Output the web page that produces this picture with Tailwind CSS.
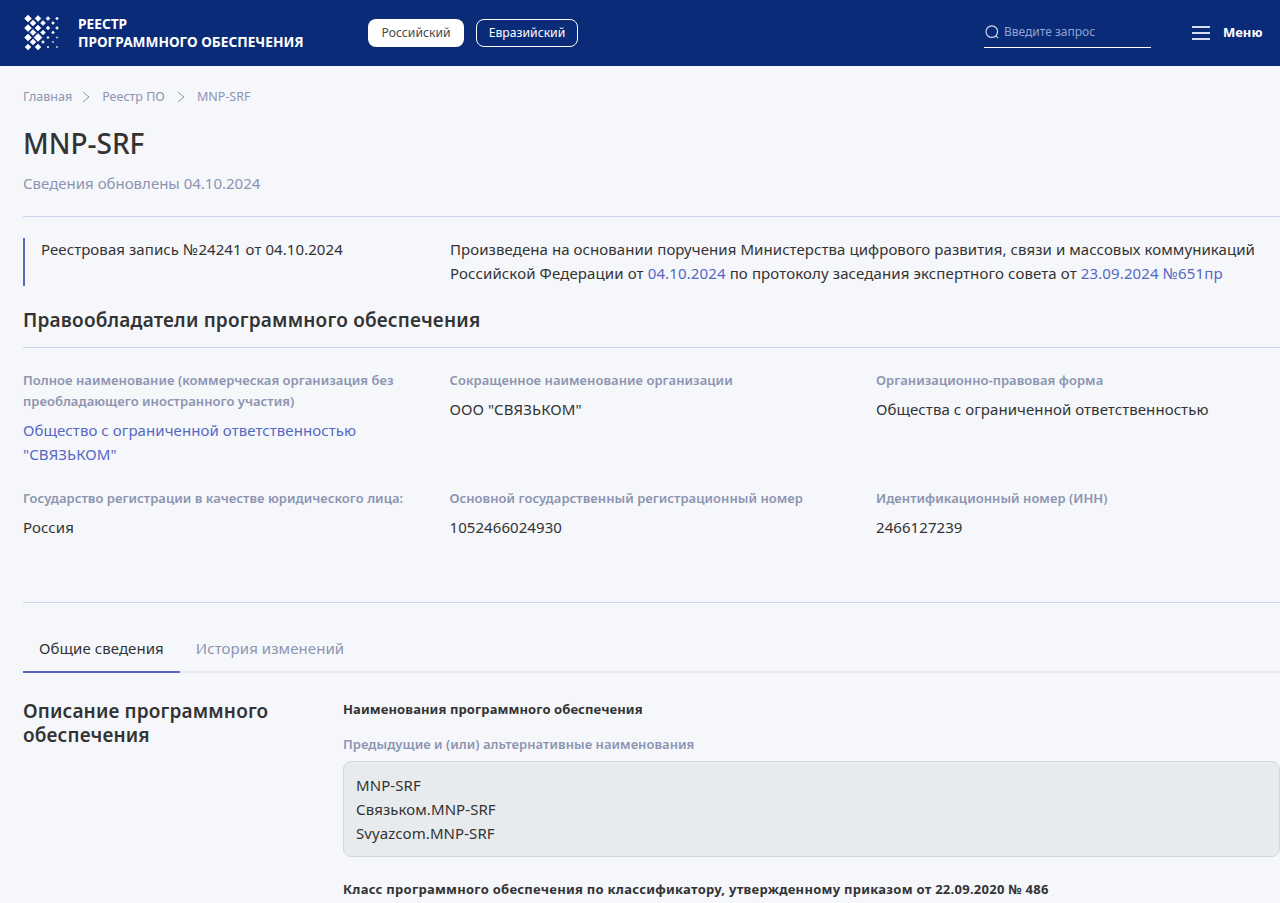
<!DOCTYPE html>
<html lang="ru">
<head>
    <meta charset="UTF-8">
    <meta name="viewport" content="width=device-width, initial-scale=1.0">
    <title>MNP-SRF</title>
    <script src="https://cdn.jsdelivr.net/npm/@tailwindcss/browser@4"></script>
</head>
<body class="bg-[#f5f7fb] text-[#333333] font-['Noto_Sans',sans-serif] h-[903px] overflow-hidden">

    <!-- Header -->
    <header class="h-[66px] bg-[#0a2b78] flex items-center pl-6 text-white">
        <svg class="w-[36px] h-[36px] shrink-0" viewBox="0 0 36 36" fill="#fff" stroke="#fff" stroke-width="0.500" stroke-linejoin="round">
            <!-- odd rows -->
            <path d="M4 0l3.500 3.500-3.500 3.500-3.500-3.500zM14 .5l3 3-3 3-3-3zM24 1.500l2 2-2 2-2-2zM33 2l1.500 1.500-1.500 1.500-1.500-1.500z"/>
            <path d="M4 9.500l3.500 3.500-3.500 3.500-3.500-3.500zM14 10l3 3-3 3-3-3zM24 11l2 2-2 2-2-2zM33 11.500l1.500 1.500-1.500 1.500-1.500-1.500z"/>
            <path d="M4 19l3.500 3.500-3.500 3.500-3.500-3.500zM14 18.500l4 4-4 4-4-4zM24 21.300l1.200 1.200-1.200 1.200-1.200-1.200zM33 21.700l.8.8-.8.8-.8-.8z"/>
            <path d="M4 29l3 3-3 3-3-3zM14 29l3 3-3 3-3-3zM24 31l1 1-1 1-1-1zM33 31.200l.8.8-.8.8-.8-.8z"/>
            <!-- even rows -->
            <path d="M9 5l3 3-3 3-3-3zM19 5.500l2.500 2.500-2.500 2.500-2.500-2.500zM29 6.500l1.500 1.500-1.500 1.500-1.500-1.500z"/>
            <path d="M9 14.500l3 3-3 3-3-3zM19 15l2.500 2.500-2.500 2.500-2.500-2.500zM29 16l1.500 1.500-1.500 1.500-1.500-1.500z"/>
            <path d="M9 24l3 3-3 3-3-3zM19 25.500l1.500 1.500-1.500 1.500-1.500-1.500zM29 26.200l.8.8-.8.8-.8-.8z"/>
        </svg>
        <div class="ml-[18px] w-[290px] text-[13.700px] leading-[18px] font-bold">
            <div>РЕЕСТР</div>
            <div>ПРОГРАММНОГО ОБЕСПЕЧЕНИЯ</div>
        </div>
        <div class="flex gap-3 text-[12.200px]">
            <div class="w-[96px] h-[28px] bg-white text-[#4a4a4a] rounded-lg flex items-center justify-center">Российский</div>
            <div class="w-[102px] h-[28px] border border-white rounded-lg flex items-center justify-center">Евразийский</div>
        </div>
        <div class="ml-[406px] w-[167px] h-[30px] border-b border-white flex items-center pl-[1px] pb-[1px]">
            <svg class="w-[14px] h-[14px]" viewBox="0 0 14 14" fill="none" stroke="#c9d6ee" stroke-width="1.200"><circle cx="6.800" cy="6.600" r="5.800"/><path d="M10.800 10.800l2.400 2.400"/></svg>
            <span class="ml-[5px] text-[12px] text-[#8ea5d3]">Введите запрос</span>
        </div>
        <div class="ml-[41px] w-[18px] h-[14px] flex flex-col justify-between">
            <div class="h-[2px] bg-[#d5def0]"></div>
            <div class="h-[2px] bg-[#d5def0]"></div>
            <div class="h-[2px] bg-[#d5def0]"></div>
        </div>
        <div class="ml-[13px] text-[13px] font-bold">Меню</div>
    </header>

    <main class="pl-[23px]">
        <!-- Breadcrumbs -->
        <nav class="h-[60px] pt-[2px] flex items-center text-[12.500px] text-[#8c94b0]">
            <span>Главная</span>
            <svg class="w-[8px] h-[12px] ml-[10px] mr-3" viewBox="0 0 8 12" fill="none" stroke="#8c94b0"><path d="M1 1l6 5-6 5"/></svg>
            <span>Реестр ПО</span>
            <svg class="w-[8px] h-[12px] mx-3" viewBox="0 0 8 12" fill="none" stroke="#8c94b0"><path d="M1 1l6 5-6 5"/></svg>
            <span>MNP-SRF</span>
        </nav>

        <h1 class="text-[28px] leading-[34px] font-medium">MNP-SRF</h1>
        <p class="mt-[13px] text-[15px] leading-[20px] text-[#8c94b0]">Сведения обновлены 04.10.2024</p>

        <div class="mt-[23px] border-t border-[#ccd3ee]"></div>

        <!-- Registry record -->
        <section class="mt-[21px] flex h-[48px] border-l-2 border-[#5b6bb5] text-[15px] tracking-[0.07px]">
            <div class="w-[425px] -mt-[1px] pl-4 leading-[24px]">Реестровая запись №24241 от 04.10.2024</div>
            <div class="-mt-[1px] leading-[24px]">
                Произведена на основании поручения Министерства цифрового развития, связи и массовых коммуникаций<br>
                <span class="tracking-[0.12px]">Российской Федерации от <span class="text-[#5568c4]">04.10.2024</span> по протоколу заседания экспертного совета от <span class="text-[#5568c4]">23.09.2024 №651пр</span></span>
            </div>
        </section>

        <h2 class="mt-[20px] text-[19px] leading-[28px] font-semibold tracking-[0.2px]">Правообладатели программного обеспечения</h2>
        <div class="mt-[13px] border-t border-[#ccd3ee]"></div>

        <!-- Owner fields -->
        <section class="mt-[22px] grid grid-cols-[426.500px_426.500px_1fr] text-[15px] tracking-[0.07px]">
            <div class="h-[118px] pr-4">
                <div class="text-[13px] leading-[21px] font-semibold text-[#8c94b0] tracking-[0.04px]">Полное наименование (коммерческая организация без преобладающего иностранного участия)</div>
                <div class="mt-[6px] leading-[24px] text-[#5568c4]">Общество с ограниченной ответственностью "СВЯЗЬКОМ"</div>
            </div>
            <div>
                <div class="text-[13px] leading-[21px] font-semibold text-[#8c94b0] tracking-[0.04px]">Сокращенное наименование организации</div>
                <div class="mt-[6px] leading-[24px]">ООО "СВЯЗЬКОМ"</div>
            </div>
            <div>
                <div class="text-[13px] leading-[21px] font-semibold text-[#8c94b0] tracking-[0.04px]">Организационно-правовая форма</div>
                <div class="mt-[6px] leading-[24px]">Общества с ограниченной ответственностью</div>
            </div>
            <div>
                <div class="text-[13px] leading-[21px] font-semibold text-[#8c94b0] tracking-[0.04px]">Государство регистрации в качестве юридического лица:</div>
                <div class="mt-[6px] leading-[24px]">Россия</div>
            </div>
            <div>
                <div class="text-[13px] leading-[21px] font-semibold text-[#8c94b0] tracking-[0.04px]">Основной государственный регистрационный номер</div>
                <div class="mt-[6px] leading-[24px]">1052466024930</div>
            </div>
            <div>
                <div class="text-[13px] leading-[21px] font-semibold text-[#8c94b0] tracking-[0.04px]">Идентификационный номер (ИНН)</div>
                <div class="mt-[6px] leading-[24px]">2466127239</div>
            </div>
        </section>

        <div class="mt-[63px] border-t border-[#ccd3ee]"></div>

        <!-- Tabs -->
        <div class="mt-[24px] flex h-[46px] border-b-2 border-[#e8e9ef] text-[15px] tracking-[0.07px]">
            <div class="h-[46px] px-4 pt-[10px] border-b-2 border-[#5568c9]">Общие сведения</div>
            <div class="h-[46px] px-4 pt-[10px] text-[#8c94b0]">История изменений</div>
        </div>

        <!-- Description -->
        <section class="mt-[25px] flex">
            <h2 class="w-[320px] shrink-0 pt-[1px] text-[19px] leading-[24px] font-semibold tracking-[0.15px]">Описание программного обеспечения</h2>
            <div class="grow pt-[1px]">
                <div class="text-[13px] leading-[20px] font-bold tracking-[0.1px]">Наименования программного обеспечения</div>
                <div class="mt-[15px] text-[13px] leading-[20px] font-semibold text-[#8c94b0] tracking-[0.04px]">Предыдущие и (или) альтернативные наименования</div>
                <div class="mt-[7px] h-[96px] bg-[#e8ebee] border border-[#d3d7dc] rounded-lg px-3 py-[11px] text-[15px] leading-[24px] tracking-[0.07px]">
                    <div>MNP-SRF</div>
                    <div>Связьком.MNP-SRF</div>
                    <div>Svyazcom.MNP-SRF</div>
                </div>
                <div class="mt-[22px] text-[13px] leading-[20px] font-bold tracking-[0.27px]">Класс программного обеспечения по классификатору, утвержденному приказом от 22.09.2020 № 486</div>
            </div>
        </section>
    </main>

</body>
</html>
